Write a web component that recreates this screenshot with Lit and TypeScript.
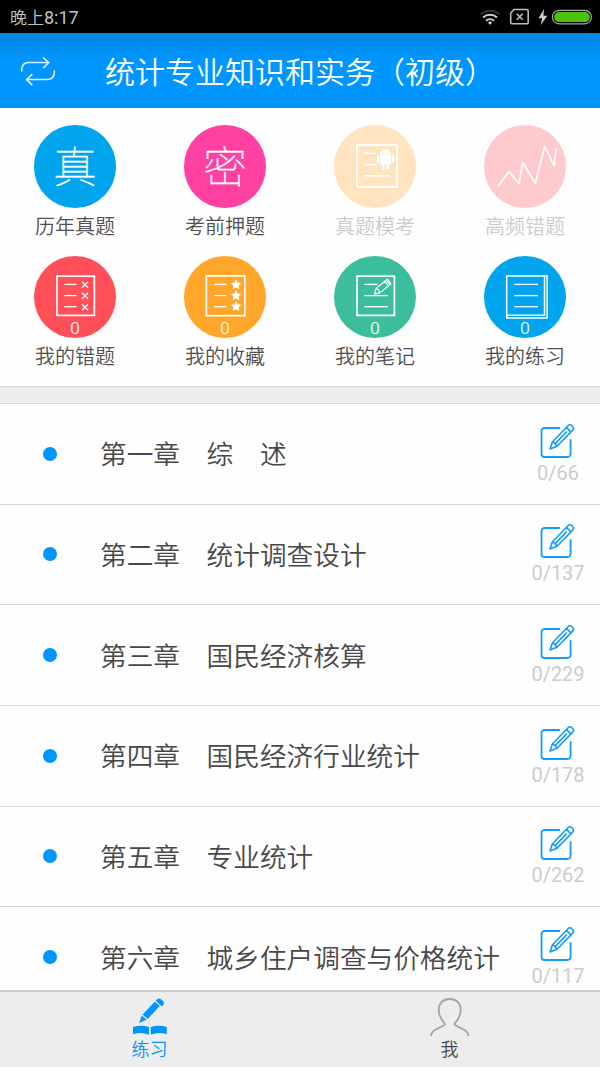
import { LitElement, html, css, svg } from "lit";
import { customElement, property } from "lit/decorators.js";
import { classMap } from "lit/directives/class-map.js";

const ruled = (ends: number[]) =>
  [28.4, 39.6, 50.7].map((y, i) => svg`<path d="M30.3 ${y}H${ends[i]}" stroke-width="1.3"/>`);

const star = (cy: number) => svg`<path transform="translate(52 ${cy})" fill="#fff" stroke="none"
  d="M0-5.4L1.6-1.9L5.2-1.5L2.6 1.1L3.3 4.9L0 3.1L-3.3 4.9L-2.6 1.1L-5.2-1.5L-1.6-1.9Z"/>`;

const glyphs: Record<string, unknown> = {
  exam: svg`
    <rect x="23" y="20" width="40.2" height="41.8" rx="1" stroke-width="1.8"/>
    <path d="M30.3 28.4H42.3M30.3 39.6H42.3M30.3 50.7H55.4" stroke-width="1.6"/>
    <g fill="#fff" stroke="none">
      <path d="M45.8 29.4a5.7 4.9 0 0 1 11.4 0z"/>
      <path d="M45.8 30.1h11.4v8.4a1 1 0 0 1-1 1h-1.4v4a1.2 1.2 0 0 1-2.4 0v-4h-1.8v4a1.2 1.2 0 0 1-2.4 0v-4h-1.4a1 1 0 0 1-1-1z"/>
      <rect x="42.8" y="30.2" width="2.3" height="7.4" rx="1.1"/>
      <rect x="57.9" y="30.2" width="2.3" height="7.4" rx="1.1"/>
    </g>
    <path d="M48 23.8l1 1.8M55 23.8l-1 1.8" stroke-width=".6"/>`,
  chart: svg`
    <path d="M7 46.5H75" stroke-width=".7" stroke-dasharray="1.5 2" opacity=".35"/>
    <path d="M14 61.2L25 46.5L35 58.8L38.7 37.5L51.3 58.2L60.7 21.2L70.3 40.8L72 23.5"
      stroke-width="1.6" stroke-linecap="round" stroke-linejoin="round"/>`,
  wrong: svg`
    <rect x="23" y="20.2" width="37.4" height="39.2" stroke-width="1.7"/>
    ${ruled([42.5, 42.5, 42.5])}
    ${[28.7, 39.8, 51.3].map((y) => svg`<path d="M47.9 ${y - 3.1}l6.2 6.2m0-6.2l-6.2 6.2" stroke-width="1.3"/>`)}`,
  favorite: svg`
    <rect x="22.4" y="19.9" width="38.4" height="39.8" stroke-width="1.7"/>
    ${ruled([42.5, 42.5, 42.5])}
    ${[28.4, 39.4, 50.2].map(star)}`,
  note: svg`
    <rect x="23" y="20.2" width="37.4" height="39.2" stroke-width="1.7"/>
    ${ruled([43.3, 54, 54])}
    <path d="M40.4 37.9l1.8-5.6L53.4 23.2l3.7 4.6L45.9 36.9zM42.2 32.3q2.8.8 3.7 4.6M50.9 25.3l3.7 4.6M52.3 24.2l3.7 4.5" stroke-width="1.1" stroke-linejoin="round"/>`,
  practice: svg`
    <path d="M22.7 20H63.1V62H22.7zM60.5 20V59.3H22.7" stroke-width="1.5"/>
    ${ruled([54, 54, 54])}`,
};

@customElement("subject-tile")
class SubjectTile extends LitElement {
  @property() label = "";
  @property() tone = "";
  @property() icon = "";
  @property() char = "";
  @property() count = "";
  @property({ type: Boolean }) muted = false;

  static styles = css`
    :host { display: flex; flex-direction: column; align-items: center; }
    .disc { display: grid; width: 82.4px; height: 82.4px; border-radius: 50%; color: #fff; }
    .disc > * { grid-area: 1 / 1; }
    svg { width: 82.4px; height: 82.4px; fill: none; stroke: #fff; }
    .char { place-self: center; font-size: 43.5px; font-weight: 100; line-height: 60px; margin-top: -3px; -webkit-text-stroke: .3px #fff; }
    .count { align-self: end; justify-self: center; font: 300 17px/20px Roboto, sans-serif; -webkit-text-stroke: .2px #fff; }
    .azure { background: #00a5ed; }
    .pink { background: #ff42a1; }
    .amber { background: #ffa62b; }
    .coral { background: #ff4f59; }
    .green { background: #3cbd9c; }
    .cream { background: #ffe4bf; }
    .blush { background: #ffcacd; }
    .label { font-size: 20px; line-height: 30px; margin-top: 3px; color: #505050; font-weight: 350; }
    .muted { color: #ccc; }
  `;

  render() {
    return html`
      <div class=${classMap({ disc: true, [this.tone]: true })}>
        ${this.char
          ? html`<span class="char">${this.char}</span>`
          : html`<svg viewBox="0 0 82.4 82.4">${glyphs[this.icon]}</svg>`}
        ${this.count ? html`<span class="count">${this.count}</span>` : ""}
      </div>
      <div class=${classMap({ label: true, muted: this.muted })}>${this.label}</div>
    `;
  }
}

@customElement("chapter-row")
class ChapterRow extends LitElement {
  @property() name = "";
  @property() progress = "";

  static styles = css`
    :host {
      display: grid; grid-template-columns: 100px 1fr 84px; align-items: center;
      box-sizing: border-box; height: 100.65px; border-bottom: 1px solid #d9d9d9;
    }
    .dot { width: 14px; height: 14px; border-radius: 50%; background: #0096ff; justify-self: center; }
    .name { font-size: 26.67px; line-height: 40px; color: #484848; white-space: nowrap; font-weight: 350; margin-top: -1px; }
    .side { display: flex; flex-direction: column; align-items: center; }
    svg { width: 36px; height: 36px; fill: none; stroke: #129cfb; stroke-width: 1.8; stroke-linejoin: round; stroke-linecap: round; margin-right: 1px; }
    .progress { font: 20px/24px Roboto, sans-serif; color: #ccc; margin-top: 2px; }
  `;

  render() {
    return html`
      <span class="dot"></span>
      <span class="name">${this.name}</span>
      <span class="side">
        <svg viewBox="0 0 36 36">
          <path d="M19.3 5H4.5a3 3 0 0 0-3 3V31a3 3 0 0 0 3 3H27.6a3 3 0 0 0 3-3V17"/>
          <path d="M10 26l2.3-7L28 2.7a2.6 2.6 0 0 1 3.9 0l.8.8a2.6 2.6 0 0 1 0 3.6L17 23.3zM12.3 19q3 .5 4.7 4.3M26.4 4.4l4.6 4.5M15.4 20.400L26.300 9.100" stroke-width="1.6"/>
        </svg>
        <span class="progress">${this.progress}</span>
      </span>
    `;
  }
}

@customElement("app-root")
class AppRoot extends LitElement {
  static styles = css`
    :host {
      display: flex; flex-direction: column; height: 1067px; overflow: hidden; background: #fefefe;
      font-family: "Noto Sans CJK SC", sans-serif;
    }
    .status {
      flex: none; height: 33px; box-sizing: border-box; background: #000; color: #c4c4c4;
      display: flex; align-items: center; justify-content: space-between; padding: 0 8px 0 10px;
      font-size: 17px; line-height: 24px; font-weight: 350;
    }
    .time { padding-top: 1px; }
    .clock { font-family: Roboto, sans-serif; font-size: 18px; font-weight: 400; }
    .status svg { width: 116px; height: 24px; fill: none; }
    .bar {
      flex: none; height: 75px; display: flex; align-items: center; box-sizing: border-box; padding-left: 20px;
      background: linear-gradient(#0086e4, #0096ff 28px); color: #fff;
    }
    .swap { width: 36px; height: 30px; fill: none; stroke: #e0f2ff; stroke-width: 1.6; stroke-linecap: round; stroke-linejoin: round; margin-top: 1px; }
    .title { font-size: 30px; line-height: 44px; margin: -1px 0 0 49px; font-weight: 350; white-space: nowrap; }
    .tiles {
      flex: none; height: 278px; box-sizing: border-box; padding-top: 17.3px;
      display: grid; grid-template-columns: repeat(4, 1fr); grid-auto-rows: 130.7px; align-content: start;
    }
    .gap { flex: none; height: 16px; background: #eee; border: solid #d8d8d8; border-width: 1px 0; }
    .chapters { flex: 1; min-height: 0; overflow: hidden; }
    .tabs {
      flex: none; height: 77px; box-sizing: border-box; border-top: 2px solid #ccc; background: #ededed;
      display: grid; grid-template-columns: 1fr 1fr;
    }
    .tab { display: flex; flex-direction: column; align-items: center; padding-top: 5px; font-size: 18px; line-height: 26px; color: #484848; font-weight: 350; }
    .tab.active { color: #0096ff; }
    .tab svg { width: 40px; height: 40px; }
    .tab span { margin: -2px 1px 0 0; }
  `;

  private tiles = [
    { label: "历年真题", tone: "azure", char: "真" },
    { label: "考前押题", tone: "pink", char: "密" },
    { label: "真题模考", tone: "cream", icon: "exam", muted: true },
    { label: "高频错题", tone: "blush", icon: "chart", muted: true },
    { label: "我的错题", tone: "coral", icon: "wrong", count: "0" },
    { label: "我的收藏", tone: "amber", icon: "favorite", count: "0" },
    { label: "我的笔记", tone: "green", icon: "note", count: "0" },
    { label: "我的练习", tone: "azure", icon: "practice", count: "0" },
  ];

  private chapters = [
    ["第一章　综　述", "0/66"],
    ["第二章　统计调查设计", "0/137"],
    ["第三章　国民经济核算", "0/229"],
    ["第四章　国民经济行业统计", "0/178"],
    ["第五章　专业统计", "0/262"],
    ["第六章　城乡住户调查与价格统计", "0/117"],
  ];

  render() {
    return html`
      <div class="status">
        <span class="time">晚上<span class="clock">8:17</span></span>
        <svg viewBox="476 4.5 116 24">
          <path d="M480.5 14a14 14 0 0 1 19 0" stroke="#333" stroke-width="2"/>
          <path d="M483 17a10.5 10.5 0 0 1 14 0M486 20.2a6 6 0 0 1 8 0" stroke="#d0d0d0" stroke-width="2"/>
          <circle cx="490" cy="22.3" r="1.6" fill="#d0d0d0"/>
          <path d="M514 9H527a1.2 1.2 0 0 1 1.2 1.2V22a1.2 1.2 0 0 1-1.2 1.2H511.9a1.2 1.2 0 0 1-1.2-1.2V12.5z" stroke="#bbb" stroke-width="1.6"/>
          <path d="M516.7 13.3l6 6m0-6l-6 6" stroke="#bbb" stroke-width="1.6"/>
          <path d="M544 8.5l-5.500 9.200h3.600l-1.400 7 6.600-9.400h-3.800z" fill="#ccc"/>
          <rect x="552.4" y="9.8" width="39" height="13.5" rx="6.7" stroke="#a5a5a5" stroke-width="1.2"/>
          <rect x="554.2" y="11.6" width="35.6" height="10" rx="5" fill="#4bc30b"/>
        </svg>
      </div>
      <div class="bar">
        <svg class="swap" viewBox="20 56 36 30">
          <path d="M21.7 71V69a6.5 6.5 0 0 1 6.5-6.5H48.5M43.5 57.8l5.3 4.7-5.3 5.2M54.3 71v2a6.5 6.5 0 0 1-6.5 6.5H27M31.8 74.6l-5.3 5 5.3 5"/>
        </svg>
        <span class="title">统计专业知识和实务（初级）</span>
      </div>
      <div class="tiles">
        ${this.tiles.map((t) => html`<subject-tile
          .label=${t.label} .tone=${t.tone} .icon=${t.icon ?? ""} .char=${t.char ?? ""}
          .count=${t.count ?? ""} .muted=${t.muted ?? false}></subject-tile>`)}
      </div>
      <div class="gap"></div>
      <div class="chapters">
        ${this.chapters.map(([name, progress]) => html`<chapter-row .name=${name} .progress=${progress}></chapter-row>`)}
      </div>
      <div class="tabs">
        <div class="tab active">
          <svg viewBox="130 996.5 40 40" fill="#0096ff">
            <path d="M139 1022.5l2.8-7.5 4.8 4.3zM142.6 1014l12.2-12.800 5 4.400-12.100 12.800zM155.700 1000.200l1.700-1.600q1.800-1.300 3.900.5l1.600 1.500q2 2 .5 3.700l-1.500 1.600z"/>
            <path d="M133 1026.500q8-2.500 16 0V1034.200q-8-3.200-16-.4zM150.800 1026.500q8-2.500 16 0V1033.800q-8-2.800-16 .4z"/>
          </svg>
          <span>练习</span>
        </div>
        <div class="tab">
          <svg viewBox="430 997 40 40" fill="none" stroke="#a3a3a3" stroke-width="1.8">
            <path d="M431 1036q.5-4.500 5-6.500l8-4.300q1.500-.9.200-2.300c-3-3.500-5.500-7.500-5.500-12.900 0-7 4.500-11 11-11s11 4 11 11c0 5.400-2.500 9.400-5.500 12.900q-1.300 1.400.2 2.300l8 4.300q4.500 2 5 6.500"/>
          </svg>
          <span>我</span>
        </div>
      </div>
    `;
  }
}
